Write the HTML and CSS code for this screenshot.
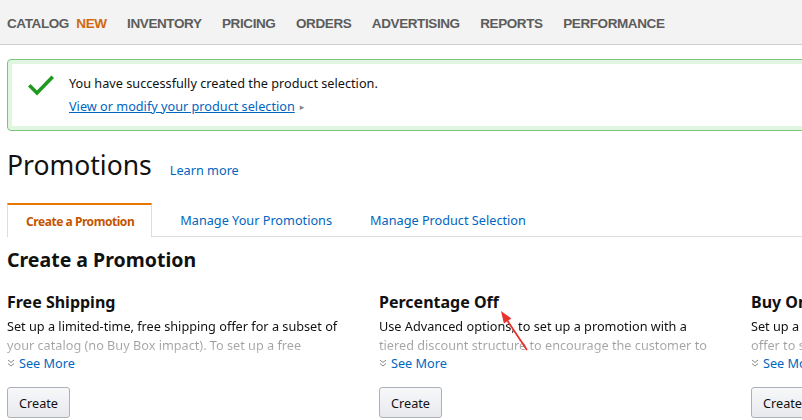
FILE: index.html
```html
<!DOCTYPE html>
<html lang="en">
<head>
<meta charset="utf-8">
<title>Promotions</title>
<link rel="stylesheet" href="styles.css">
</head>
<body>
<nav class="topnav">
  <a class="nav-item">CATALOG <span class="nav-new">NEW</span></a>
  <a class="nav-item">INVENTORY</a>
  <a class="nav-item">PRICING</a>
  <a class="nav-item">ORDERS</a>
  <a class="nav-item">ADVERTISING</a>
  <a class="nav-item">REPORTS</a>
  <a class="nav-item">PERFORMANCE</a>
</nav>
<main class="page">
  <div class="alert">
    <svg class="alert-icon" width="26" height="22" viewBox="0 0 26 22"><path d="M2.5 11.5 L9 18 L23.5 3" fill="none" stroke="#1f9a1f" stroke-width="3.6" stroke-linecap="square"/></svg>
    <div class="alert-body">
      <p class="alert-text">You have successfully created the product selection.</p>
      <p class="alert-link-row"><a class="alert-link">View or modify your product selection</a><span class="caret">&#9656;</span></p>
    </div>
  </div>

  <div class="title-row">
    <h1 class="title">Promotions</h1>
    <a class="learn">Learn more</a>
  </div>

  <div class="tabs">
    <a class="tab tab-active">Create a Promotion</a>
    <a class="tab tab-2">Manage Your Promotions</a>
    <a class="tab tab-3">Manage Product Selection</a>
    <span class="tab-fill"></span>
  </div>

  <h2 class="section-title">Create a Promotion</h2>

  <div class="cards">
    <section class="card">
      <h3 class="card-title">Free Shipping</h3>
      <p class="card-desc">Set up a limited-time, free shipping offer for a subset of your catalog (no Buy Box impact). To set up a free shipping offer for all products</p>
      <a class="see-more"><svg class="chev" width="8" height="8" viewBox="0 0 8 8"><path d="M1 1 L4 3.5 L7 1 M1 4.5 L4 7 L7 4.5" fill="none" stroke="#888" stroke-width="1"/></svg>See More</a>
      <button class="btn">Create</button>
    </section>
    <section class="card">
      <h3 class="card-title">Percentage Off</h3>
      <p class="card-desc">Use Advanced options, to set up a promotion with a tiered discount structure to encourage the customer to buy more</p>
      <a class="see-more"><svg class="chev" width="8" height="8" viewBox="0 0 8 8"><path d="M1 1 L4 3.5 L7 1 M1 4.5 L4 7 L7 4.5" fill="none" stroke="#888" stroke-width="1"/></svg>See More</a>
      <button class="btn">Create</button>
    </section>
    <section class="card">
      <h3 class="card-title">Buy One Get One</h3>
      <p class="card-desc">Set up a limited-time, buy one get one free or discounted offer to select customers when they buy more</p>
      <a class="see-more"><svg class="chev" width="8" height="8" viewBox="0 0 8 8"><path d="M1 1 L4 3.5 L7 1 M1 4.5 L4 7 L7 4.5" fill="none" stroke="#888" stroke-width="1"/></svg>See More</a>
      <button class="btn">Create</button>
    </section>
  </div>

  <svg class="annot-arrow" width="40" height="50" viewBox="0 0 40 50">
    <line x1="34" y1="47" x2="14.6" y2="18" stroke="#e8322c" stroke-width="1.8"/>
    <path d="M8 8 L18.4 15.5 L10.9 20.5 Z" fill="#e8322c"/>
  </svg>
</main>
</body>
</html>
```

FILE: styles.css
```css
html, body {
  margin: 0;
  padding: 0;
  overflow: hidden;
  background: #fff;
}
body {
  width: 802px;
  height: 420px;
  font-family: "Noto Sans", "DejaVu Sans", sans-serif;
  font-size: 12.7px;
  color: #111;
}
p { margin: 0; }
a { cursor: pointer; }

.topnav {
  height: 45px;
  box-sizing: border-box;
  background: #f3f3f3;
  border-bottom: 1px solid #cfcfcf;
  display: flex;
  align-items: center;
  gap: 20.5px;
  padding: 3px 0 0 7px;
}
.nav-item {
  font-family: "Liberation Sans", Arial, sans-serif;
  font-weight: bold;
  font-size: 13.5px;
  color: #5c5c5c;
  letter-spacing: -0.4px;
  white-space: nowrap;
}
.nav-new {
  color: #d0690f;
  margin-left: 4px;
}

.page {
  position: relative;
  width: 840px;
  padding: 14px 7px 0;
}

.alert {
  height: 72px;
  box-sizing: border-box;
  border: 1px solid #7cc47c;
  border-radius: 4px;
  box-shadow: inset 0 0 0 4px #e0f6e0;
  display: flex;
  align-items: flex-start;
  padding: 15px 0 0 20px;
}
.alert-icon {
  flex: none;
}
.alert-body {
  margin-left: 15px;
  margin-top: -3px;
  line-height: 23px;
}
.alert-text { color: #111; }
.alert-link {
  color: #0066c0;
  text-decoration: underline;
}
.caret {
  color: #888;
  font-size: 9px;
  margin-left: 5px;
  vertical-align: 1px;
}

.title-row {
  display: flex;
  align-items: baseline;
  margin-top: 16px;
}
.title {
  margin: 0;
  font-weight: normal;
  font-size: 26.5px;
  line-height: 36px;
  color: #111;
}
.learn {
  color: #0066c0;
  margin-left: 18px;
}

.tabs {
  display: flex;
  margin-top: 20px;
  height: 34px;
}
.tab {
  display: flex;
  align-items: center;
  color: #0066c0;
  border-bottom: 1px solid #ddd;
  box-sizing: border-box;
  white-space: nowrap;
}
.tab-active {
  color: #c45500;
  font-weight: bold;
  font-size: 12px;
  letter-spacing: -0.45px;
  border-top: 2px solid #e77600;
  border-left: 1px solid #ddd;
  border-right: 1px solid #ddd;
  border-bottom: none;
  padding: 0 17px 0 18px;
}
.tab-2 { padding: 0 18px 0 28px; }
.tab-3 { padding: 0 18px 0 20px; }
.tab-fill {
  flex: 1;
  border-bottom: 1px solid #ddd;
}

.section-title {
  margin: 9px 0 0;
  font-size: 19.5px;
  line-height: 28px;
  font-weight: bold;
}

.cards {
  display: grid;
  grid-template-columns: repeat(3, 340px);
  column-gap: 32px;
  margin-top: 17px;
}
.card-title {
  margin: 0;
  font-size: 16px;
  line-height: 22px;
  font-weight: bold;
}
.card-desc {
  line-height: 19px;
  height: 36px;
  overflow: hidden;
  margin-top: 4px;
  -webkit-mask-image: linear-gradient(to bottom, #000 0, #000 19px, rgba(0,0,0,0.45) 22px, rgba(0,0,0,0.3) 36px);
  mask-image: linear-gradient(to bottom, #000 0, #000 19px, rgba(0,0,0,0.45) 22px, rgba(0,0,0,0.3) 36px);
}
.see-more {
  display: flex;
  align-items: center;
  line-height: 18px;
  color: #0066c0;
  margin-top: 1px;
}
.chev {
  margin-right: 4px;
  flex: none;
}
.btn {
  display: block;
  margin-top: 15px;
  height: 31px;
  padding: 0 11px;
  font-family: inherit;
  font-size: 12.7px;
  color: #111;
  background: linear-gradient(to bottom, #f7f8fa, #e7e9ec);
  border: 1px solid #adb1b8;
  border-radius: 3px;
}

.annot-arrow {
  position: absolute;
  left: 493px;
  top: 258px;
}
```
